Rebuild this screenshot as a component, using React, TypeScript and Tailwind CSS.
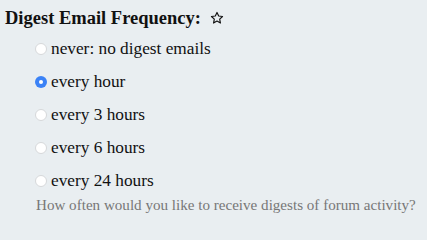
import React, { useState } from "react";

const options = [
  { value: "never", label: "never: no digest emails" },
  { value: "1", label: "every hour" },
  { value: "3", label: "every 3 hours" },
  { value: "6", label: "every 6 hours" },
  { value: "24", label: "every 24 hours" },
];

const App: React.FC = () => {
  const [freq, setFreq] = useState("1");

  return (
    <div className="min-h-screen w-full bg-[#e9eef1] text-[#111] font-['Liberation_Serif',Georgia,serif]">
      <div className="pl-[5px] pt-[8px]">
        <div className="flex items-center gap-[9px] h-[20px]">
          <span className="text-[18.5px] font-bold leading-[20px]">Digest Email Frequency:</span>
          <svg width="14" height="14" viewBox="0 0 24 24" fill="none" stroke="#111" strokeWidth="2" strokeLinejoin="round">
            <path d="M12 2.5l2.9 6.1 6.6.8-4.9 4.6 1.3 6.6L12 17.3l-5.9 3.3 1.3-6.6-4.9-4.6 6.6-.8z" />
          </svg>
        </div>
        <div className="pl-[30px] pt-[11px] flex flex-col gap-[13px]">
          {options.map((o) => (
            <label key={o.value} className="flex items-center gap-[4px] h-[20px] cursor-pointer">
              <span
                onClick={() => setFreq(o.value)}
                className={
                  freq === o.value
                    ? "w-[12px] h-[12px] rounded-full bg-[#3b82f6] flex items-center justify-center"
                    : "w-[12px] h-[12px] rounded-full bg-white border border-[#d6d8da]"
                }
              >
                {freq === o.value && <span className="w-[4px] h-[4px] rounded-full bg-white" />}
              </span>
              <span className="text-[17.3px] leading-[20px]">{o.label}</span>
            </label>
          ))}
          <p className="pl-px text-[15.1px] leading-[18px] text-[#777] -mt-[8px] whitespace-nowrap">
            How often would you like to receive digests of forum activity?
          </p>
        </div>
      </div>
    </div>
  );
};

export default App;
